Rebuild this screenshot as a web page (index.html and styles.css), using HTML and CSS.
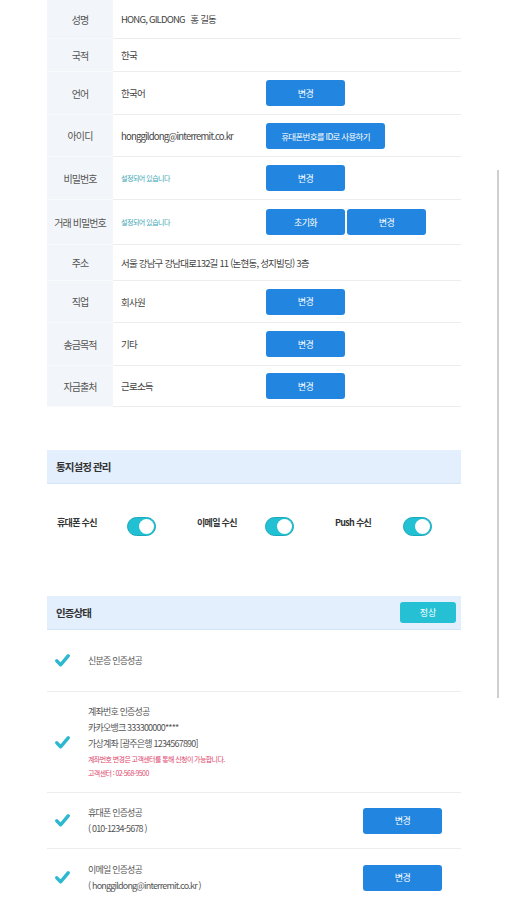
FILE: index.html
```html
<!DOCTYPE html>
<html lang="ko">
<head>
<meta charset="utf-8">
<title>회원정보</title>
<link rel="stylesheet" href="styles.css">
</head>
<body>
<div class="page">
  <div class="info">
    <div class="row r39"><div class="lbl">성명</div><div class="val"><span class="txt wide">HONG, GILDONG &nbsp; 홍 길동</span></div></div>
    <div class="row r33"><div class="lbl">국적</div><div class="val"><span class="txt">한국</span></div></div>
    <div class="row r43"><div class="lbl">언어</div><div class="val"><span class="txt">한국어</span><button class="btn">변경</button></div></div>
    <div class="row r42"><div class="lbl">아이디</div><div class="val"><span class="txt">honggildong@interremit.co.kr</span><button class="btn btn-wide">휴대폰번호를 ID로 사용하기</button></div></div>
    <div class="row r43"><div class="lbl">비밀번호</div><div class="val"><span class="txt note">설정되어 있습니다</span><button class="btn">변경</button></div></div>
    <div class="row r45"><div class="lbl">거래 비밀번호</div><div class="val"><span class="txt note">설정되어 있습니다</span><button class="btn">초기화</button><button class="btn btn-next">변경</button></div></div>
    <div class="row r36"><div class="lbl">주소</div><div class="val"><span class="txt wide">서울 강남구 강남대로132길 11 (논현동, 성지빌딩) 3층</span></div></div>
    <div class="row r42"><div class="lbl">직업</div><div class="val"><span class="txt">회사원</span><button class="btn">변경</button></div></div>
    <div class="row r43"><div class="lbl">송금목적</div><div class="val"><span class="txt">기타</span><button class="btn">변경</button></div></div>
    <div class="row r41"><div class="lbl">자금출처</div><div class="val"><span class="txt">근로소득</span><button class="btn">변경</button></div></div>
  </div>

  <div class="sec-head notice-head"><span class="sec-title">통지설정 관리</span></div>
  <div class="toggles">
    <div class="tg"><span class="tg-lbl">휴대폰 수신</span><span class="switch"><span class="knob"></span></span></div>
    <div class="tg"><span class="tg-lbl">이메일 수신</span><span class="switch"><span class="knob"></span></span></div>
    <div class="tg"><span class="tg-lbl">Push 수신</span><span class="switch"><span class="knob"></span></span></div>
  </div>

  <div class="sec-head auth-head"><span class="sec-title">인증상태</span><span class="status">정상</span></div>
  <div class="auth">
    <div class="item i1">
      <svg class="chk" viewBox="0 0 15 15"><path d="M1.8 7.8 L5.6 11.8 L13.2 2.8" fill="none" stroke="#2cb8cf" stroke-width="3.4" stroke-linecap="round" stroke-linejoin="round"/></svg>
      <div class="lines"><div class="ln">신분증 인증성공</div></div>
    </div>
    <div class="item i2">
      <svg class="chk" viewBox="0 0 15 15"><path d="M1.8 7.8 L5.6 11.8 L13.2 2.8" fill="none" stroke="#2cb8cf" stroke-width="3.4" stroke-linecap="round" stroke-linejoin="round"/></svg>
      <div class="lines">
        <div class="ln">계좌번호 인증성공</div>
        <div class="ln">카카오뱅크 333300000****</div>
        <div class="ln">가상계좌 [광주은행 1234567890]</div>
        <div class="ln red">계좌번호 변경은 고객센터를 통해 신청이 가능합니다.</div>
        <div class="ln red">고객센터 : 02-568-9500</div>
      </div>
    </div>
    <div class="item i3">
      <svg class="chk" viewBox="0 0 15 15"><path d="M1.8 7.8 L5.6 11.8 L13.2 2.8" fill="none" stroke="#2cb8cf" stroke-width="3.4" stroke-linecap="round" stroke-linejoin="round"/></svg>
      <div class="lines"><div class="ln">휴대폰 인증성공</div><div class="ln">( 010-1234-5678 )</div></div>
      <button class="btn">변경</button>
    </div>
    <div class="item i4">
      <svg class="chk" viewBox="0 0 15 15"><path d="M1.8 7.8 L5.6 11.8 L13.2 2.8" fill="none" stroke="#2cb8cf" stroke-width="3.4" stroke-linecap="round" stroke-linejoin="round"/></svg>
      <div class="lines"><div class="ln">이메일 인증성공</div><div class="ln">( honggildong@interremit.co.kr )</div></div>
      <button class="btn">변경</button>
    </div>
  </div>
</div>
<div class="scrollbar"></div>
</body>
</html>
```

FILE: styles.css
```css
html, body {
  margin: 0;
  padding: 0;
  background: #ffffff;
}
body {
  font-family: "Noto Sans CJK KR", "Noto Sans", sans-serif;
  color: #333;
  width: 507px;
  height: 900px;
  overflow: hidden;
  position: relative;
}
.page {
  margin-left: 47px;
  width: 414px;
}
.info {
  display: flex;
  flex-direction: column;
}
.row {
  display: flex;
  align-items: stretch;
}
.r33 { height: 33px; }
.r36 { height: 36px; }
.r39 { height: 39px; }
.r41 { height: 41px; }
.r42 { height: 42px; }
.r43 { height: 43px; }
.r45 { height: 45px; }
.lbl {
  width: 66px;
  flex: none;
  background: #f2f5f9;
  border-bottom: 1px solid #f8fafc;
  display: flex;
  align-items: center;
  justify-content: center;
  font-size: 10px;
  letter-spacing: -0.9px;
  color: #555;
  box-sizing: border-box;
  white-space: nowrap;
}
.val {
  flex: 1;
  display: flex;
  align-items: center;
  padding-left: 8px;
  border-bottom: 1px solid #ededed;
  box-sizing: border-box;
}
.txt {
  width: 145px;
  flex: none;
  font-size: 9.5px;
  letter-spacing: -0.8px;
  color: #444;
  white-space: nowrap;
}
.txt.wide { width: auto; }
.txt.note {
  font-size: 7px;
  color: #3aa5b5;
  letter-spacing: -0.5px;
}
.btn {
  width: 79px;
  height: 26px;
  border: none;
  border-radius: 3px;
  background: #2286e0;
  color: #fff;
  font-family: "Noto Sans CJK KR", sans-serif;
  font-size: 9px;
  letter-spacing: -0.6px;
  padding: 0;
  flex: none;
}
.btn-wide { width: 119px; font-size: 8.5px; letter-spacing: -0.7px; }
.btn-next { margin-left: 2px; }

.sec-head {
  height: 34px;
  background: #e3effc;
  border-bottom: 1px solid #d4e5f8;
  box-sizing: border-box;
  display: flex;
  align-items: center;
  justify-content: space-between;
  padding: 0 5px 0 9px;
}
.notice-head { margin-top: 43px; }
.sec-title {
  font-size: 10.5px;
  font-weight: bold;
  color: #333;
  letter-spacing: -0.9px;
}
.toggles {
  display: flex;
  padding-left: 10px;
  height: 112px;
  padding-top: 33px;
  box-sizing: border-box;
}
.tg {
  width: 138px;
  flex: none;
  display: flex;
  align-items: flex-start;
}
.tg-lbl {
  width: 70px;
  flex: none;
  font-size: 9px;
  font-weight: bold;
  color: #333;
  letter-spacing: -0.7px;
  margin-top: -1px;
}
.tg + .tg .tg-lbl { padding-left: 2px; width: 68px; }
.switch {
  width: 29px;
  height: 19px;
  flex: none;
  border-radius: 10px;
  background: #22c0d3;
  box-sizing: border-box;
  border: 1px solid #1aa9bb;
  display: flex;
  align-items: center;
  justify-content: flex-end;
  padding-right: 1px;
}
.knob {
  width: 15px;
  height: 15px;
  border-radius: 50%;
  background: #fff;
}
.status {
  width: 56px;
  height: 21px;
  border-radius: 3px;
  background: #26c0d4;
  color: #fff;
  font-size: 9px;
  display: flex;
  align-items: center;
  justify-content: center;
}
.auth {
  display: flex;
  flex-direction: column;
}
.item {
  display: flex;
  align-items: center;
  border-bottom: 1px solid #ededed;
  box-sizing: border-box;
  padding-left: 8px;
  padding-right: 19px;
}
.i1 { height: 62px; }
.i2 { height: 101px; }
.i3 { height: 56px; }
.i4 { height: 57px; border-bottom: none; }
.chk {
  width: 15px;
  height: 15px;
  flex: none;
  margin-right: 18px;
}
.lines {
  flex: 1;
  display: flex;
  flex-direction: column;
}
.ln {
  font-size: 9px;
  letter-spacing: -0.8px;
  color: #555;
  line-height: 16px;
  white-space: nowrap;
}
.ln.red {
  font-size: 7px;
  color: #e0476d;
  letter-spacing: -0.6px;
  line-height: 14px;
}
.scrollbar {
  position: absolute;
  left: 497px;
  top: 170px;
  width: 2px;
  height: 528px;
  background: #cfcfcf;
}
```
